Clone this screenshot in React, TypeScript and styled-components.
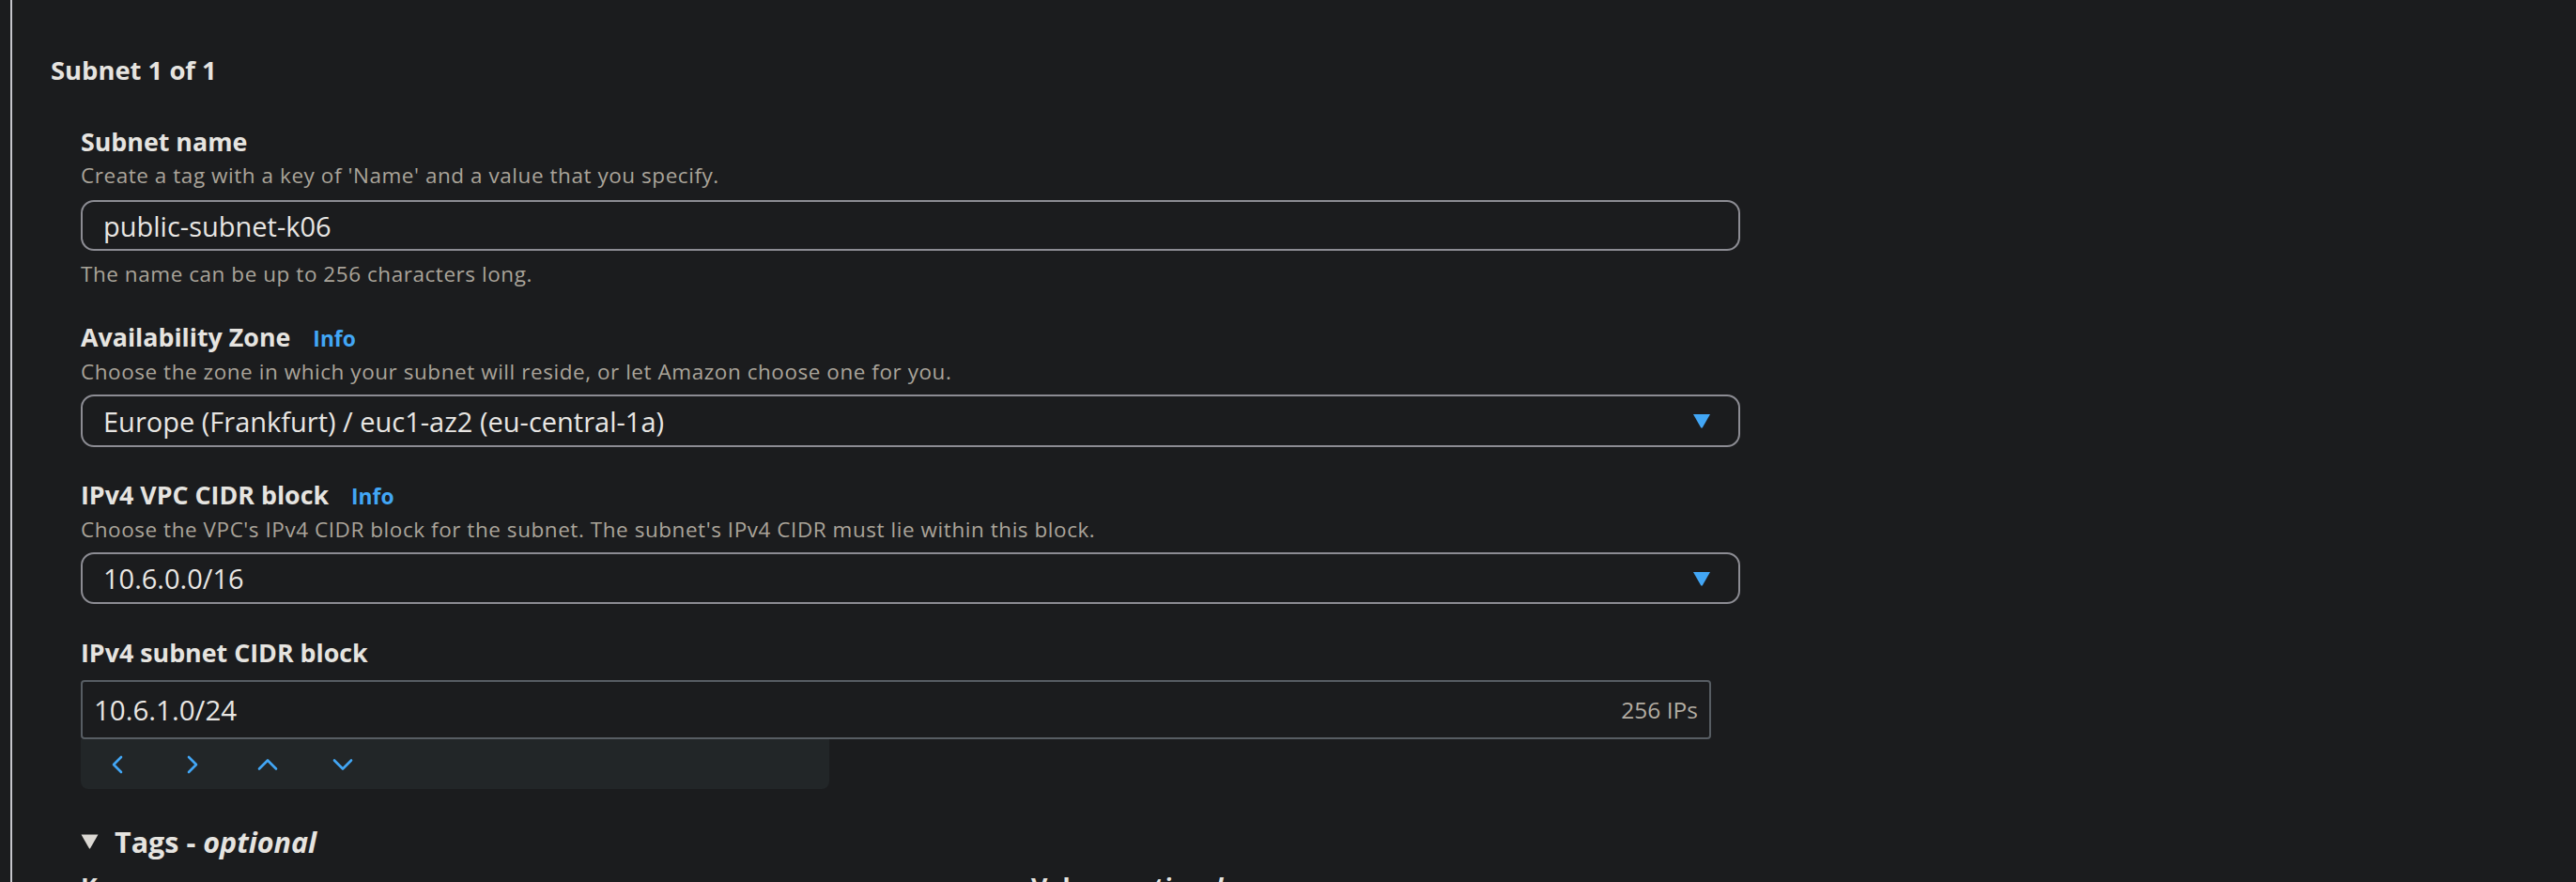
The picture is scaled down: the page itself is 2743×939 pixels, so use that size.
import React from "react";
import styled, { createGlobalStyle } from "styled-components";

const Global = createGlobalStyle`
  html, body {
    margin: 0;
    padding: 0;
    background: #1b1c1e;
    font-family: "Open Sans", "Noto Sans", sans-serif;
    color: #e6e4e0;
  }
  #root { min-height: 100vh; }
`;

const Page = styled.div`
  padding-left: 11px;
  min-height: 100vh;
  box-sizing: border-box;
`;

const Section = styled.section`
  border-left: 2px solid #c5c5cb;
  min-height: 100vh;
  padding: 57px 0 0 41px;
  box-sizing: border-box;
`;

const Heading = styled.h2`
  margin: 0;
  font-size: 27.4px;
  line-height: 36px;
  font-weight: 700;
  color: #e6e4e0;
`;

const Fields = styled.div`
  padding-left: 32px;
  width: 1767px;
  display: flex;
  flex-direction: column;
`;

const Field = styled.div<{ $gap: number }>`
  margin-top: ${(p) => p.$gap}px;
  display: flex;
  flex-direction: column;
`;

const LabelRow = styled.div`
  display: flex;
  align-items: baseline;
  gap: 24px;
`;

const Label = styled.label`
  font-size: 26.8px;
  line-height: 34px;
  font-weight: 700;
  color: #e6e4e0;
`;

const Info = styled.a`
  font-size: 22.8px;
  font-weight: 700;
  color: #42a6f5;
  text-decoration: none;
`;

const Desc = styled.div<{ $top?: number }>`
  font-size: 22.5px;
  letter-spacing: 0.55px;
  line-height: 30px;
  color: #aaa49a;
  margin-top: ${(p) => p.$top ?? 4}px;
`;

const RoundBox = styled.div<{ $h: number; $top: number }>`
  box-sizing: border-box;
  height: ${(p) => p.$h}px;
  margin-top: ${(p) => p.$top}px;
  border: 2px solid #8c8c93;
  border-radius: 14px;
  display: flex;
  align-items: center;
  padding: 0 29px 0 22px;
  font-size: 29px;
  color: #e8e6e3;
  justify-content: space-between;
`;

const Caret = styled.svg`
  width: 20px;
  height: 16px;
  flex: none;
`;

const CidrWrap = styled.div`
  margin-top: 12px;
  display: flex;
  flex-direction: column;
`;

const CidrInput = styled.div`
  box-sizing: border-box;
  width: 1736px;
  height: 63px;
  border: 2px solid #575d63;
  border-radius: 4px;
  display: flex;
  align-items: center;
  justify-content: space-between;
  padding: 0 12px 0 12px;
  font-size: 29.5px;
  color: #e8e6e3;
`;

const Count = styled.span`
  font-size: 24.5px;
  color: #b3ada3;
`;

const Toolbar = styled.div`
  width: 797px;
  height: 53px;
  background: #222628;
  border-radius: 0 0 8px 8px;
  display: flex;
  align-items: center;
  padding-left: 27px;
  box-sizing: border-box;
`;

const ToolButton = styled.button`
  width: 80px;
  height: 40px;
  padding: 0;
  border: 0;
  background: transparent;
  display: flex;
  align-items: center;
  justify-content: flex-start;
  cursor: pointer;
`;

const Chevron = styled.svg`
  width: 24px;
  height: 24px;
`;

const TagsHeader = styled.div`
  margin-top: 37px;
  display: flex;
  align-items: center;
  gap: 17px;
  font-size: 30.5px;
  line-height: 38px;
  font-weight: 700;
  color: #e6e4e0;
`;

const Optional = styled.i`
  font-weight: 700;
  font-style: italic;
`;

const TagGrid = styled.div`
  margin-top: 12px;
  display: grid;
  grid-template-columns: 1012px 1fr;
`;

const chevrons: Record<string, string> = {
  left: "M16 4 L8 12 L16 20",
  right: "M8 4 L16 12 L8 20",
  up: "M3 16.5 L12 7.5 L21 16.5",
  down: "M3 7.5 L12 16.5 L21 7.5",
};

function CaretDown() {
  return (
    <Caret viewBox="0 0 20 16">
      <path d="M1 1 H19 L11 15 Q10 16.5 9 15 Z" fill="#42a6f5" />
    </Caret>
  );
}

export default function App() {
  return (
    <>
      <Global />
      <Page>
        <Section>
          <Heading>Subnet 1 of 1</Heading>
          <Fields>
            <Field $gap={41}>
              <Label>Subnet name</Label>
              <Desc>Create a tag with a key of 'Name' and a value that you specify.</Desc>
              <RoundBox $h={54} $top={11}>public-subnet-k06</RoundBox>
              <Desc $top={10}>The name can be up to 256 characters long.</Desc>
            </Field>
            <Field $gap={35}>
              <LabelRow>
                <Label>Availability Zone</Label>
                <Info>Info</Info>
              </LabelRow>
              <Desc $top={5}>
                Choose the zone in which your subnet will reside, or let Amazon choose one for you.
              </Desc>
              <RoundBox $h={56} $top={9}>
                <span>Europe (Frankfurt) / euc1-az2 (eu-central-1a)</span>
                <CaretDown />
              </RoundBox>
            </Field>
            <Field $gap={34}>
              <LabelRow>
                <Label>IPv4 VPC CIDR block</Label>
                <Info>Info</Info>
              </LabelRow>
              <Desc $top={5}>
                Choose the VPC's IPv4 CIDR block for the subnet. The subnet's IPv4 CIDR must lie within this block.
              </Desc>
              <RoundBox $h={55} $top={9}>
                <span>10.6.0.0/16</span>
                <CaretDown />
              </RoundBox>
            </Field>
            <Field $gap={35}>
              <Label>IPv4 subnet CIDR block</Label>
              <CidrWrap>
                <CidrInput>
                  <span>10.6.1.0/24</span>
                  <Count>256 IPs</Count>
                </CidrInput>
                <Toolbar>
                  {["left", "right", "up", "down"].map((d) => (
                    <ToolButton key={d} aria-label={d}>
                      <Chevron viewBox="0 0 24 24">
                        <path
                          d={chevrons[d]}
                          fill="none"
                          stroke="#42a6f5"
                          strokeWidth="2.6"
                          strokeLinecap="round"
                          strokeLinejoin="round"
                        />
                      </Chevron>
                    </ToolButton>
                  ))}
                </Toolbar>
              </CidrWrap>
            </Field>
            <TagsHeader>
              <svg width="19" height="16" viewBox="0 0 19 16">
                <path d="M0.5 0.5 H18.5 L10.2 15 Q9.5 16 8.8 15 Z" fill="#dcd9d4" />
              </svg>
              <span>
                Tags - <Optional>optional</Optional>
              </span>
            </TagsHeader>
            <TagGrid>
              <Label>Key</Label>
              <Label>
                Value - <Optional>optional</Optional>
              </Label>
            </TagGrid>
          </Fields>
        </Section>
      </Page>
    </>
  );
}
